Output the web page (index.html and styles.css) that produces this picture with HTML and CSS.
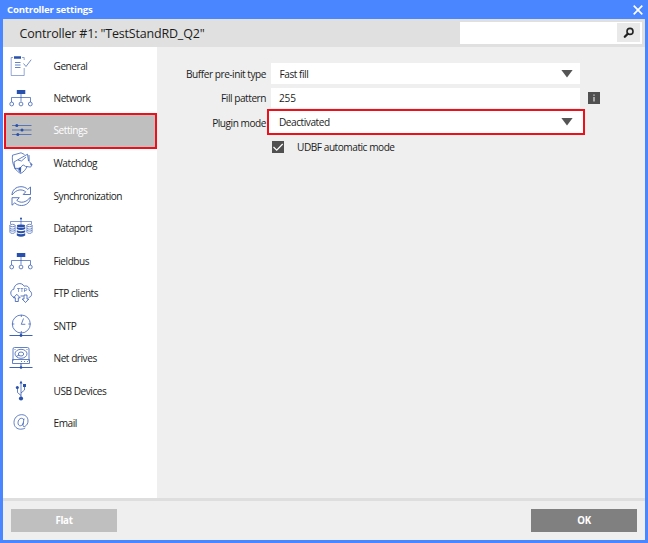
FILE: index.html
```html
<!DOCTYPE html>
<html lang="en">
<head>
<meta charset="utf-8">
<title>Controller settings</title>
<link rel="stylesheet" href="styles.css">
</head>
<body>
<div class="window">
  <div class="titlebar">
    <span class="title">Controller settings</span>
    <svg class="close" viewBox="0 0 10 10"><path d="M.7.7l8.6 8.6M9.3.7L.7 9.3"/></svg>
  </div>
  <header class="header">
    <h1>Controller #1: "TestStandRD_Q2"</h1>
    <div class="search">
      <div class="search-button">
        <svg width="12" height="12" viewBox="0 0 12 12"><circle cx="7" cy="4.4" r="3" fill="none" stroke="#222" stroke-width="1.6"/><path d="M4.8 6.8L1.8 9.8" stroke="#222" stroke-width="2.3" stroke-linecap="round"/></svg>
      </div>
    </div>
  </header>
  <main class="body">
    <nav class="sidebar">
      <div class="item">
        <svg class="icon" viewBox="0 0 24 24"><path d="M4 3.5H2.2V21.5H15.2V14M15.2 6V3.5H13" opacity=".55"/><path d="M5 3.5h7" stroke-width="2.5"/><path d="M6 8.5h5.500M6 11h5.500M6 13.500h5.500" opacity=".8"/><path d="M14.500 9.500l2.500 3 5.200-6.800" opacity=".7"/></svg>
        <span>General</span>
      </div>
      <div class="item">
        <svg class="icon" viewBox="0 0 24 24"><path class="fill" d="M7.800 4h8.500v4h-8.500z"/><path d="M12 8v7.500M2.500 16v-4.500h19V16" opacity=".75"/><g opacity=".8"><circle cx="2.700" cy="18" r="1.900"/><circle cx="12" cy="18" r="1.900"/><circle cx="21.300" cy="18" r="1.900"/></g></svg>
        <span>Network</span>
      </div>
      <div class="item selected">
        <svg class="icon" viewBox="0 0 24 24"><path d="M3 7.500h19.500M3 12h19.500M3 16.500h19.500" opacity=".75"/><g class="fill"><circle cx="7.800" cy="7.500" r="1.500"/><circle cx="13" cy="12" r="1.500"/><circle cx="8.800" cy="16.500" r="1.500"/></g></svg>
        <span>Settings</span>
      </div>
      <div class="item">
        <svg class="icon" viewBox="0 0 24 24"><path d="M15.500 3.500L12 1.800 3.500 4.200C2.800 11 4.500 18.500 11.500 22.500c3.500-1.500 5.500-4.500 6.500-7M20 4l.2 6" opacity=".8"/><path d="M5 11L18.500 3.200l1 6.800 3.700 3.500-1.600 2.600-5-.7-2.500-1.500-2.300 2.200-.4 5.500L8.200 17 6 18zM9 9l3.500 1 4.500-4" opacity=".8"/><path class="fill" d="M9 17l3-1-.6 5zM21 12l2 1.500-1.200 1z"/></svg>
        <span>Watchdog</span>
      </div>
      <div class="item">
        <svg class="icon" viewBox="0 0 24 24"><g opacity=".85"><path d="M3 11C3 6 7 2.700 12 2.700c2.800 0 5 1 6.700 2.700L21.500 3v7.500h-7.300l2.500-2.700C13 4.800 7.500 5 3 11z"/><path d="M21.500 13c0 5-4 8.500-9 8.500-2.800 0-5-1-6.700-2.700L3 21.200v-7.500h7.300l-2.500 2.700c3.700 3 9.200 2.600 13.700-3.400z"/></g></svg>
        <span>Synchronization</span>
      </div>
      <div class="item">
        <svg class="icon" viewBox="0 0 24 24"><path d="M12 2v7M1.500 8V5.500h21V8" opacity=".65"/><circle class="fill" cx="12" cy="2.600" r="1"/><g class="barrel"><ellipse cx="3.500" cy="9.500" rx="2.600" ry="1.200"/><path d="M.9 9.500v6.700c0 1.600 5.200 1.600 5.200 0V9.500M1 12c0 1.500 5 1.500 5 0M1 14c0 1.500 5 1.500 5 0"/><ellipse cx="20.500" cy="9.500" rx="2.600" ry="1.200"/><path d="M17.900 9.500v6.700c0 1.600 5.200 1.600 5.200 0V9.500M18 12c0 1.500 5 1.500 5 0M18 14c0 1.500 5 1.500 5 0"/></g><g class="fill"><ellipse cx="12" cy="10" rx="4.200" ry="1.400"/><path d="M7.800 11.100q4.200 2 8.400 0v2q-4.200 2-8.400 0zM7.800 14.200q4.200 2 8.400 0v2q-4.200 2-8.400 0zM7.800 17.300q4.200 2 8.400 0v2.200q-4.200 2.700-8.400 0z"/></g></svg>
        <span>Dataport</span>
      </div>
      <div class="item">
        <svg class="icon" viewBox="0 0 24 24"><path class="fill" d="M7.800 4h8.500v4h-8.500z"/><path d="M12 8v7.500M2.500 16v-4.500h19V16" opacity=".75"/><g opacity=".8"><circle cx="2.700" cy="18" r="1.900"/><circle cx="12" cy="18" r="1.900"/><circle cx="21.300" cy="18" r="1.900"/></g></svg>
        <span>Fieldbus</span>
      </div>
      <div class="item">
        <svg class="icon" viewBox="0 0 24 24"><path d="M5.500 16.500C.5 15 .8 9 4.800 8.300 5.200 2.500 12.500.5 15.200 5.200c3.500-1 5.500 1.500 4.800 4 4 2.300 3 6.800-.3 7.300M11.500 15h3" opacity=".85"/><path d="M7.800 13.300l-3.300 3.500h1.800v3.700h3v-3.700h1.900zM16.500 21.500l-3.300-3.500H15v-4h3v4h1.800z" opacity=".85"/><path d="M8 7.500h3M9.500 7.500v3.500M11.500 7.500h2.800M12.900 7.500v3.500M15.500 11V7.500h1.300a1 1 0 0 1 0 2h-1.300" stroke-width=".55"/></svg>
        <span>FTP clients</span>
      </div>
      <div class="item">
        <svg class="icon" viewBox="0 0 24 24"><circle cx="12.300" cy="10" r="9" opacity=".8"/><path d="M12.300 1v2M12.300 17v2M3.300 10h2M19.300 10h2M12.300 10.300L14.500 4.500M12.300 10.300h4" opacity=".8"/><path d="M12 19v3M.5 21.500h23"/><circle class="fill" cx="12" cy="21.500" r="1.400"/></svg>
        <span>SNTP</span>
      </div>
      <div class="item">
        <svg class="icon" viewBox="0 0 24 24"><g opacity=".8"><path d="M4 15V3q0-1.500 1.500-1.500h13Q20 1.500 20 3v12M3.500 13.500h17v4h-17z"/><ellipse cx="12" cy="7.800" rx="6" ry="4.500"/><ellipse cx="12" cy="8" rx="2.700" ry="2"/><path d="M7 10.500l3.300-1.500M5.500 3.500h1M17.500 3.500h1M12 15.500h1M15 15.500h1M18 15.500h1"/></g><path d="M12 17.500V22M.5 21.500h23"/><circle class="fill" cx="12" cy="21.500" r="1.300"/></svg>
        <span>Net drives</span>
      </div>
      <div class="item">
        <svg class="icon" viewBox="0 0 24 24"><path d="M12 3.500V19M12 16.500l-3.500-3V8.500M12 14l3.500-3V7" opacity=".8"/><path class="fill" d="M10.500 4.500L12 1.500l1.500 3z"/><circle class="fill" cx="8.300" cy="8.500" r="1.500"/><path class="fill" d="M14 5h3v3h-3z"/><circle class="fill" cx="12" cy="19.500" r="2.100"/></svg>
        <span>USB Devices</span>
      </div>
      <div class="item">
        <svg class="icon" viewBox="0 0 24 24"><path d="M15 7.500l-1 6.500c-.3 1.700 1 2 2.200 1.200C18 14.200 19 12.200 19 10c0-4-2.700-6.300-6.300-6.300C8.300 3.700 5 7 5 11.500c0 4.300 3 6.700 6.700 6.700 1.800 0 3.300-.4 4.500-1.200M14.700 9c-.4-1.100-1.100-1.700-2.200-1.700-2 0-3.500 2-3.500 4.500 0 1.800.8 3 2.200 3 1.500 0 2.600-1.200 3.100-3.200" opacity=".8"/></svg>
        <span>Email</span>
      </div>
    </nav>
    <section class="form">
      <div class="row">
        <label class="label">Buffer pre-init type</label>
        <div class="field select"><span>Fast fill</span><i class="arrow"></i></div>
      </div>
      <div class="row">
        <label class="label">Fill pattern</label>
        <div class="field number">255</div>
        <div class="info"><svg viewBox="0 0 12 12"><path d="M6 2.500v1.300M6 5v4.500"/></svg></div>
      </div>
      <div class="row">
        <label class="label">Plugin mode</label>
        <div class="field select marked"><span>Deactivated</span><i class="arrow"></i></div>
      </div>
      <div class="row check-row">
        <svg class="check" viewBox="0 0 12 12"><path d="M1.500 6l3.200 3.200 6-6.200"/></svg>
        <span>UDBF automatic mode</span>
      </div>
    </section>
  </main>
  <footer class="footer">
    <div class="button flat">Flat</div>
    <div class="button">OK</div>
  </footer>
</div>
</body>
</html>
```
FILE: styles.css
```css
* { box-sizing: border-box; }
body {
  margin: 0;
  font: 10.1px/14px "Open Sans", "Noto Sans", sans-serif;
  letter-spacing: -0.46px;
  color: #1c1c1c;
}
.window {
  width: 648px;
  height: 543px;
  padding: 0 3px 3px;
  background: #4a86ff;
  display: flex;
  flex-direction: column;
}
.titlebar {
  height: 19px;
  padding: 0 2px 0 4px;
  display: flex;
  align-items: center;
  justify-content: space-between;
  color: #fff;
}
.title { font-size: 9.6px; font-weight: 700; letter-spacing: -0.2px; }
.close { width: 10px; height: 10px; stroke: #fff; stroke-width: 1.7; fill: none; }
.header {
  height: 28px;
  padding: 0 3px 0 16.500px;
  background: #e0e0e0;
  display: flex;
  align-items: center;
  justify-content: space-between;
}
h1 { margin: 0; padding-top: 1px; font-size: 12.500px; font-weight: 400; letter-spacing: -0.18px; }
.search {
  width: 182px;
  height: 22px;
  padding: 1px 2px 2px;
  background: #fff;
  display: flex;
  justify-content: flex-end;
}
.search-button {
  width: 23px;
  background: #e9e9e9;
  display: flex;
  align-items: center;
  justify-content: center;
}
.body { flex: 1; display: flex; background: #efefef; min-height: 0; }
.sidebar { width: 154px; padding-top: 2.250px; background: #fff; }
.item {
  height: 32.500px;
  padding-left: 6px;
  display: flex;
  align-items: center;
  gap: 20.500px;
}
.item.selected {
  height: 36px;
  margin: -1.500px 0 -2px 1px;
  padding: 0 0 1px 3px;
  border: 2px solid #ee0f1b;
  background: #bfbfbf;
  color: #fff;
}
.icon {
  width: 24px;
  height: 24px;
  fill: none;
  stroke: #2850ad;
  stroke-width: .9;
  overflow: visible;
}
.fill { fill: #2850ad; stroke: none; }
.barrel { stroke-width: .8; opacity: .8; }
.form { flex: 1; padding-top: 16px; display: flex; flex-direction: column; gap: 3.500px; }
.row { height: 21px; display: flex; align-items: center; }
.label { width: 109px; margin-right: 5px; text-align: right; white-space: nowrap; }
.field {
  width: 309px;
  height: 20.500px;
  padding: 0 7px 0 8px;
  background: #fff;
  display: flex;
  align-items: center;
}
.number { letter-spacing: -0.2px; }
.select { padding-left: 8.500px; justify-content: space-between; }
.marked {
  width: 318px;
  height: 26px;
  margin: -2px -5px 0 -4px;
  padding: 0 10px 0 10px;
  border: 2.500px solid #ee0f1b;
}
.arrow { width: 12px; height: 8px; background: #555; clip-path: polygon(0 0, 100% 0, 50% 100%); }
.info {
  width: 12px;
  height: 12px;
  margin-left: 8px;
  background: #505050;
}
.info svg { display: block; fill: none; stroke: #ccc; stroke-width: 1.400; }
.check-row { padding-left: 115px; gap: 13px; }
.check { width: 12px; height: 12px; background: #505050; fill: none; stroke: #fff; stroke-width: 1.200; }
.footer {
  height: 42px;
  padding: 8px 8px 0 8px;
  border-top: 3px solid #dedede;
  background: #efefef;
  display: flex;
  justify-content: space-between;
}
.button {
  width: 106px;
  height: 23px;
  background: #808080;
  color: #fff;
  font-size: 9.700px;
  font-weight: 700;
  letter-spacing: -0.300px;
  line-height: 23px;
  text-align: center;
}
.flat { background: #bfbfbf; }
```
